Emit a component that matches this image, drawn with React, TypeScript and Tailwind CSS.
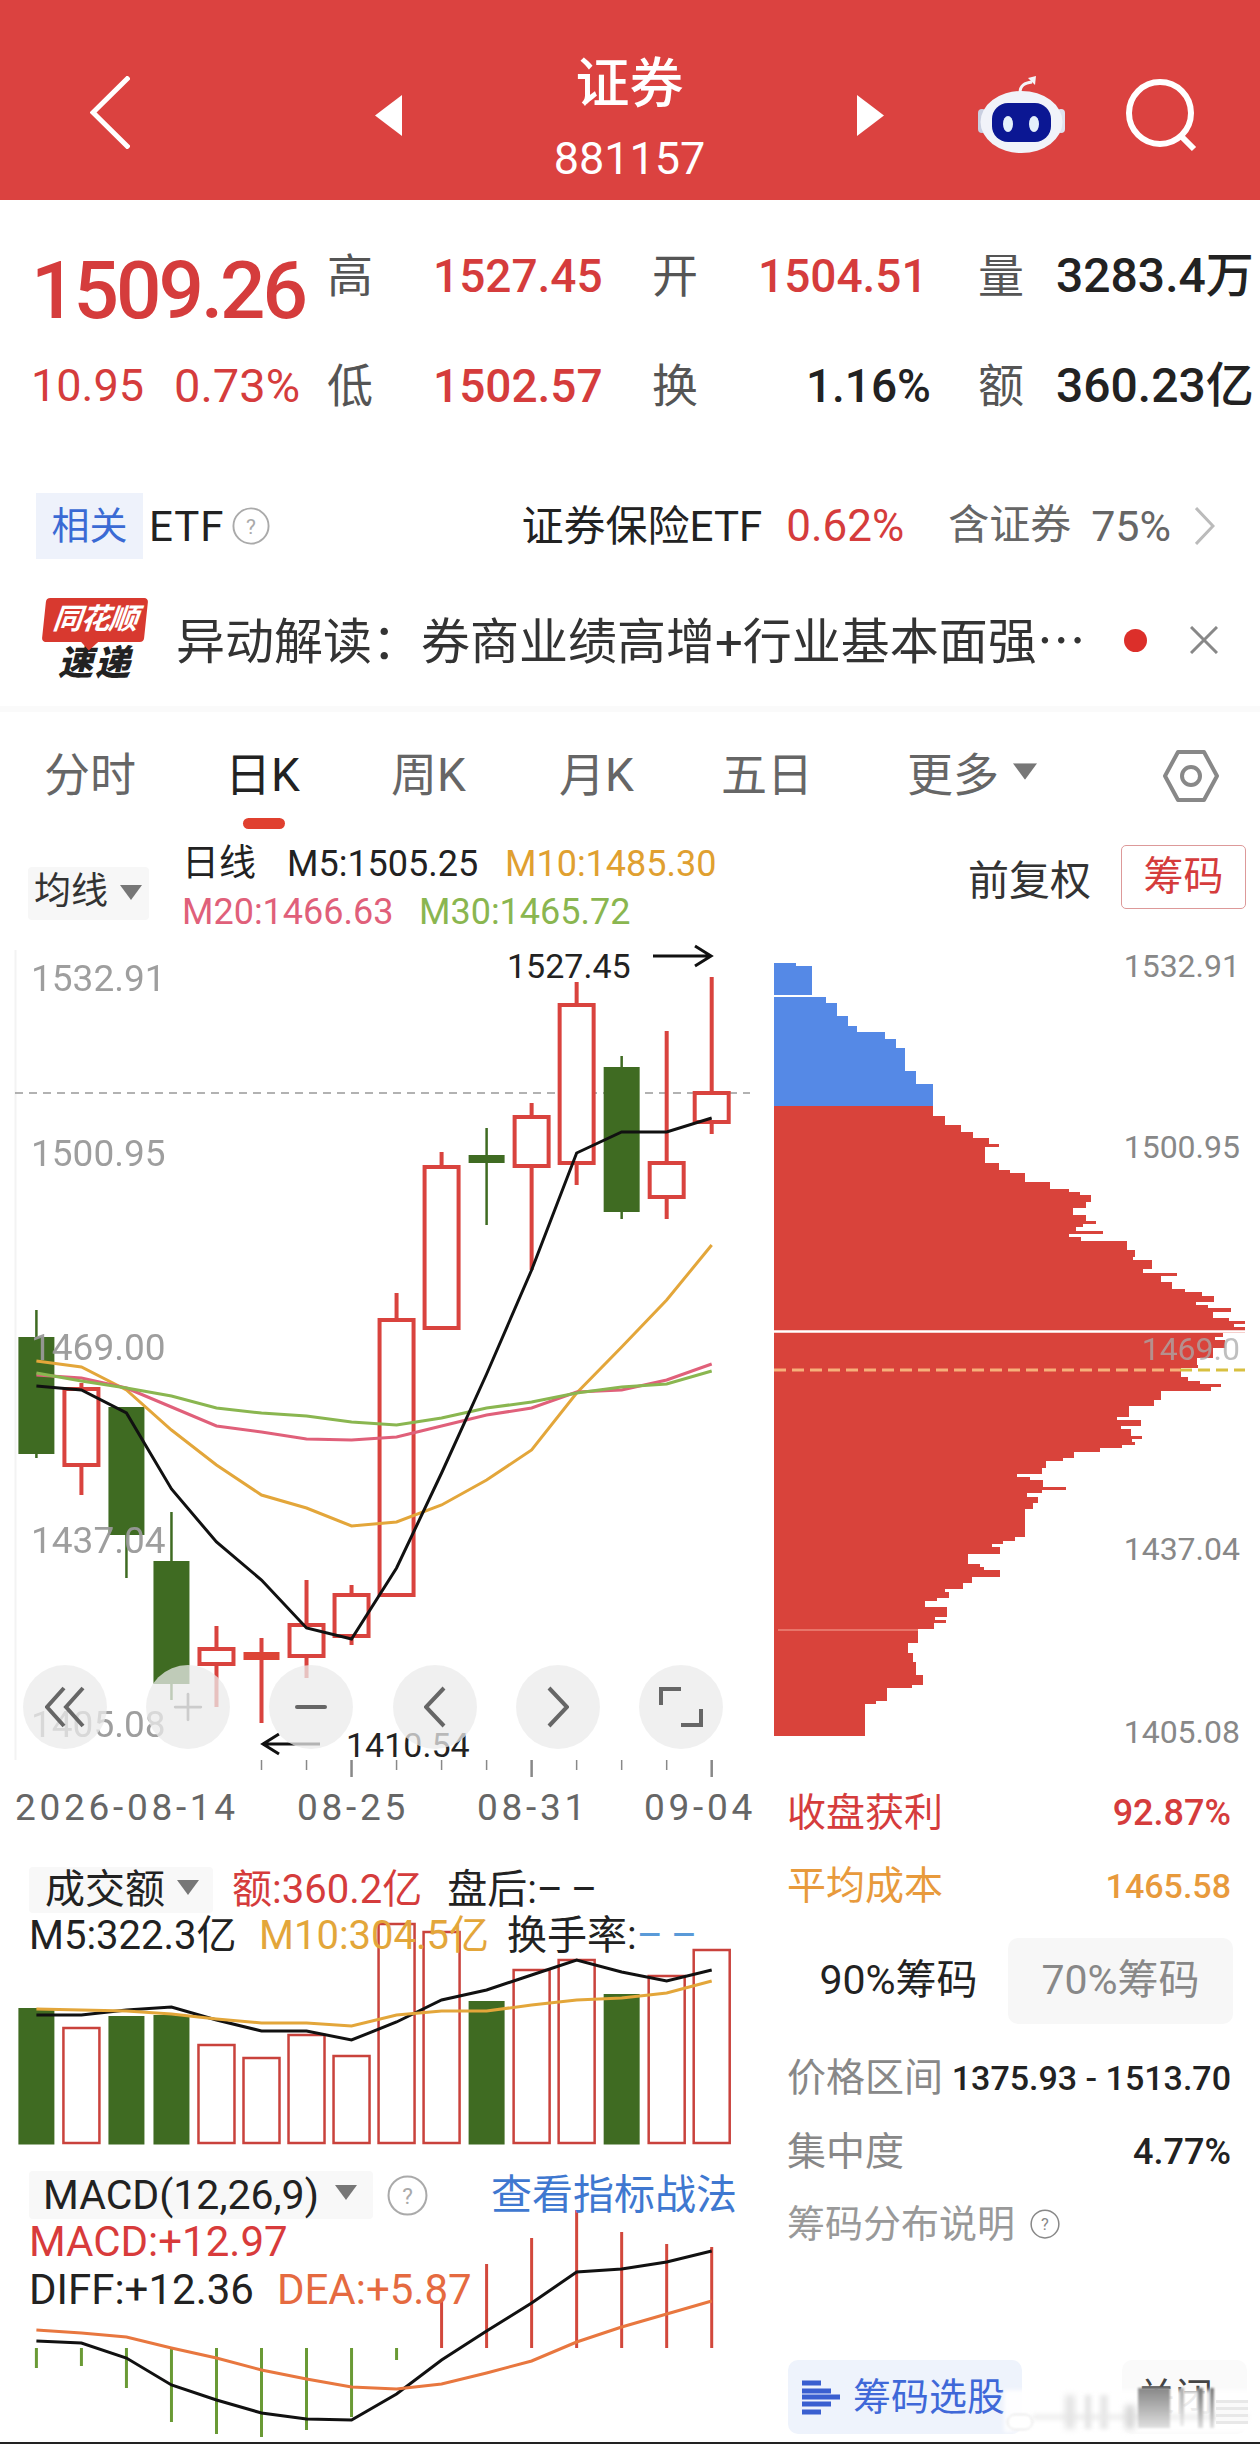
import { Minus, Plus } from "lucide-react";

const cx = (i: number) => 36.4 + 45.02 * i;

// x index order, [wick top, body top, body bottom, wick bottom, kind]
type Candle = [number, number, number, number, "up" | "down" | "solid"];
const candles: Candle[] = [
  [1310, 1337, 1454, 1458, "down"],
  [1383, 1387, 1465, 1495, "up"],
  [1407, 1407, 1535, 1578, "down"],
  [1512, 1561, 1684, 1700, "down"],
  [1626, 1647, 1664, 1707, "up"],
  [1638, 1652, 1660, 1723, "solid"],
  [1580, 1623, 1656, 1678, "up"],
  [1585, 1593, 1636, 1645, "up"],
  [1293, 1318, 1595, 1595, "up"],
  [1152, 1165, 1328, 1328, "up"],
  [1128, 1155, 1163, 1225, "down"],
  [1103, 1115, 1166, 1270, "up"],
  [982, 1003, 1163, 1185, "up"],
  [1056, 1067, 1212, 1219, "down"],
  [1031, 1161, 1197, 1219, "up"],
  [977, 1091, 1122, 1134, "up"],
];

const volumes: [number, boolean][] = [
  [2008, false], [2028, true], [2016, false], [2015, false], [2045, true], [2058, true], [2035, true], [2056, true],
  [1924, true], [1932, true], [2001, false], [1970, true], [1960, true], [1994, false], [1976, true], [1950, true],
];

const macdBars = [2368, 2366, 2388, 2422, 2434, 2437, 2430, 2417, 2360, 2300, 2264, 2238, 2210, 2232, 2244, 2247];

const pts = (ys: number[]) => ys.map((y, i) => `${cx(i)},${y}`).join(" ");

const ma5 = [1386, 1390, 1413, 1489, 1542, 1580, 1628, 1639, 1568, 1473, 1374, 1270, 1153, 1132, 1132, 1118];
const ma10 = [1361, 1367, 1390, 1430, 1465, 1495, 1508, 1526, 1522, 1505, 1480, 1450, 1393, 1347, 1300, 1245];
const ma20 = [1375, 1378, 1388, 1407, 1426, 1432, 1439, 1440, 1437, 1426, 1415, 1408, 1392, 1390, 1380, 1364];
const ma30 = [1373, 1381, 1388, 1396, 1408, 1413, 1416, 1422, 1425, 1418, 1408, 1402, 1393, 1387, 1384, 1371];

const volBlack = [2015, 2015, 2010, 2007, 2020, 2031, 2031, 2040, 2022, 2000, 1990, 1975, 1960, 1972, 1981, 1970];
const volYellow = [2009, 2010, 2011, 2014, 2019, 2023, 2023, 2026, 2015, 2011, 2011, 2005, 2000, 1998, 1993, 1981];

const diff = [2341, 2343, 2358, 2385, 2400, 2413, 2419, 2420, 2394, 2360, 2331, 2303, 2272, 2269, 2262, 2251];
const dea = [2330, 2333, 2337, 2348, 2358, 2370, 2379, 2387, 2389, 2384, 2373, 2361, 2342, 2327, 2314, 2301];

// chip profile steps, read as [y, right edge]
const blueTop: number[][] = [[963, 796], [966, 812]];
const blueSteps: number[][] = [
  [997, 826], [1003, 837], [1016, 848], [1026, 857], [1032, 885], [1039, 896], [1048, 905], [1071, 916], [1084, 933],
];
const redSteps: number[][] = [
  [1106, 933], [1116, 945], [1125, 961], [1132, 973], [1138, 989], [1144, 999], [1147, 985], [1163, 999], [1170, 1010],
  [1173, 1025], [1182, 1050], [1189, 1069], [1192, 1080], [1195, 1091], [1202, 1086], [1208, 1073], [1215, 1086], [1221, 1096],
  [1224, 1083], [1227, 1076], [1231, 1103], [1234, 1069], [1237, 1081], [1241, 1127], [1250, 1135], [1257, 1133], [1260, 1152],
  [1269, 1143], [1273, 1177], [1276, 1161], [1282, 1172], [1289, 1185], [1292, 1202], [1296, 1214], [1302, 1196], [1305, 1208],
  [1308, 1231], [1312, 1213], [1318, 1229], [1321, 1245], [1324, 1234], [1327, 1245], [1333, 1223], [1337, 1215], [1340, 1225],
  [1348, 1213], [1358, 1197], [1365, 1198], [1368, 1181], [1377, 1188], [1381, 1200], [1384, 1221], [1387, 1211], [1391, 1161],
  [1400, 1154], [1406, 1129], [1417, 1117], [1420, 1141], [1426, 1121], [1429, 1131], [1436, 1142], [1439, 1132], [1442, 1135],
  [1445, 1122], [1448, 1100], [1452, 1074], [1458, 1063], [1461, 1046], [1468, 1042], [1474, 1017], [1477, 1030], [1480, 1043],
  [1487, 1066], [1490, 1042], [1493, 1027], [1497, 1038], [1503, 1033], [1509, 1025], [1537, 1015], [1541, 1003], [1544, 992],
  [1547, 1000], [1554, 968], [1564, 980], [1567, 984], [1570, 1000], [1577, 972], [1583, 963], [1589, 945], [1592, 949],
  [1598, 937], [1601, 925], [1607, 947], [1617, 935], [1620, 946], [1623, 934], [1629, 918], [1643, 908], [1653, 913],
  [1662, 916], [1675, 923], [1685, 912], [1688, 887], [1701, 876], [1704, 865],
];

const chipPath = (steps: number[][], end: number) => {
  let d = `M774 ${steps[0][0]}`;
  steps.forEach(([y, x], i) => {
    const next = i + 1 < steps.length ? steps[i + 1][0] : end;
    d += ` L${x} ${y} L${x} ${next}`;
  });
  return d + ` L774 ${end} Z`;
};

function RoundBtn({ children }: { children: React.ReactNode }) {
  return (
    <div className="flex h-[84px] w-[84px] items-center justify-center rounded-full bg-[#ebebeb]/75 text-[#666]">
      {children}
    </div>
  );
}

function Caret({ className = "" }: { className?: string }) {
  return (
    <svg viewBox="0 0 22 15" className={`h-[15px] w-[22px] shrink-0 ${className}`}>
      <path d="M0 0H22L11 15Z" fill="#777" />
    </svg>
  );
}

function Help({ size, color = "#aaa" }: { size: number; color?: string }) {
  return (
    <svg viewBox="0 0 40 40" width={size} height={size} className="shrink-0">
      <circle cx="20" cy="20" r="18.5" fill="none" stroke={color} strokeWidth="2" />
      <text x="20" y="28" textAnchor="middle" fontSize="22" fill={color}>?</text>
    </svg>
  );
}

function Robot() {
  return (
    <svg viewBox="0 0 87 78" className="h-[78px] w-[87px] shrink-0">
      <path d="M42 18C42 10 47 8 54 7" fill="none" stroke="#f4f4f8" strokeWidth="3" />
      <path d="M50 3L58 1L57 10Z" fill="#f4f4f8" />
      <rect x="0" y="34" width="8" height="24" rx="4" fill="#c9cfe0" />
      <rect x="79" y="34" width="8" height="24" rx="4" fill="#dfe2ee" />
      <ellipse cx="43.500" cy="47" rx="41" ry="31" fill="#f1f3f9" />
      <rect x="14" y="28" width="59" height="39" rx="16" fill="#0b1793" />
      <ellipse cx="30" cy="49" rx="5" ry="8" fill="#e4f1fb" />
      <ellipse cx="56" cy="49" rx="5" ry="8" fill="#e4f1fb" />
    </svg>
  );
}

export default function App() {
  return (
    <div className="relative flex h-[2444px] w-[1260px] flex-col overflow-hidden bg-white text-[#222] [font-family:Roboto,'Noto_Sans_CJK_SC',sans-serif]">
      {/* title bar */}
      <header className="flex h-[200px] shrink-0 items-start bg-[#db4240] pl-[90px] text-white">
        <svg viewBox="0 0 40 73" className="mt-[76px] h-[73px] w-[40px] shrink-0">
          <path d="M39 1L3 36.500L39 72" fill="none" stroke="white" strokeWidth="5" />
        </svg>
        <svg viewBox="0 0 27 41" className="ml-[245px] mt-[95px] h-[41px] w-[27px] shrink-0">
          <path d="M27 0V41L0 20.500Z" fill="white" />
        </svg>
        <div className="mt-[55px] flex w-[455px] shrink-0 flex-col items-center">
          <div className="text-[54px] font-medium leading-[60px]">证券</div>
          <div className="mt-[19px] text-[45px] leading-[50px]">881157</div>
        </div>
        <svg viewBox="0 0 27 41" className="mt-[95px] h-[41px] w-[27px] shrink-0">
          <path d="M0 0V41L27 20.500Z" fill="white" />
        </svg>
        <div className="ml-[94px] mt-[75px]">
          <Robot />
        </div>
        <svg viewBox="0 0 72 76" className="ml-[60px] mt-[78px] h-[76px] w-[72px] shrink-0">
          <circle cx="35" cy="35" r="31" fill="none" stroke="white" strokeWidth="6" />
          <path d="M57 59L69 71" stroke="white" strokeWidth="6" />
        </svg>
      </header>

      {/* quote */}
      <section className="h-[280px] shrink-0 pl-[31px] pt-[21px]">
        <div className="grid grid-cols-[296px_106px_219px_106px_220px_78px_1fr] grid-rows-[110px_110px] items-start text-[46px] leading-[110px]">
          <div className="text-[80px] font-medium leading-[140px] tracking-[-3px] text-[#d53c3c]">1509.26</div>
          <div className="text-[#555]">高</div>
          <div className="font-medium text-[#d53c3c]">1527.45</div>
          <div className="text-[#555]">开</div>
          <div className="font-medium text-[#d53c3c]">1504.51</div>
          <div className="text-[#555]">量</div>
          <div className="whitespace-nowrap text-[48px] font-medium">3283.4万</div>

          <div className="flex gap-[30px] text-[#d53c3c]">
            <span className="text-[45px]">10.95</span>
            <span className="text-[47px]">0.73%</span>
          </div>
          <div className="text-[#555]">低</div>
          <div className="font-medium text-[#d53c3c]">1502.57</div>
          <div className="text-[#555]">换</div>
          <div className="pr-[47px] text-right font-medium">1.16%</div>
          <div className="text-[#555]">额</div>
          <div className="whitespace-nowrap text-[48px] font-medium">360.23亿</div>
        </div>
      </section>

      {/* related etf */}
      <section className="flex h-[90px] shrink-0 items-center pl-[36px] pr-[45px] pt-[2px]">
        <div className="flex h-[66px] w-[107px] items-center justify-center bg-[#eef2fb] text-[38px] text-[#3a6ad4]">相关</div>
        <div className="ml-[6px] text-[42px] tracking-[1px]">ETF</div>
        <div className="ml-[7px]">
          <Help size={38} />
        </div>
        <div className="ml-auto whitespace-nowrap text-[42px]">证券保险ETF</div>
        <div className="ml-[24px] text-[44px] text-[#d53c3c]">0.62%</div>
        <div className="ml-[44px] whitespace-nowrap text-[41px] text-[#666]">含证券</div>
        <div className="ml-[20px] text-[43px] text-[#666]">75%</div>
        <svg viewBox="0 0 20 38" className="ml-[24px] h-[38px] w-[20px] shrink-0">
          <path d="M1 1L18 19L1 37" fill="none" stroke="#bbb" strokeWidth="3" />
        </svg>
      </section>

      {/* news */}
      <section className="flex h-[136px] shrink-0 items-center pl-[44px] pt-[4px]">
        <div className="flex w-[102px] shrink-0 flex-col items-center">
          <div className="relative flex h-[44px] w-[102px] -skew-x-6 items-center justify-center rounded-[4px] bg-[#d8392f] text-[29px] font-bold italic tracking-[-1px] text-white">
            同花顺
            <div className="absolute -bottom-[6px] left-[42px] h-[12px] w-[12px] rotate-45 bg-[#d8392f]"></div>
          </div>
          <div className="mt-[4px] text-[35px] font-black italic leading-[36px] tracking-[2px] text-[#222]">速递</div>
        </div>
        <div className="ml-[30px] whitespace-nowrap text-[49px] leading-[60px] text-[#333]">
          异动解读：券商业绩高增+行业基本面强<span className="[font-family:'Noto_Sans_CJK_SC',sans-serif]">…</span>
        </div>
        <div className="ml-[38px] h-[23px] w-[23px] shrink-0 rounded-full bg-[#dc2f2a]"></div>
        <svg viewBox="0 0 28 28" className="ml-[43px] h-[28px] w-[28px] shrink-0">
          <path d="M1 1L27 27M27 1L1 27" stroke="#888" strokeWidth="3" />
        </svg>
      </section>
      <div className="h-[6px] shrink-0 bg-[#fafafa]"></div>

      {/* period tabs */}
      <nav className="flex h-[128px] shrink-0 items-start pl-[44px] pt-[38px] text-[46px] leading-[50px] text-[#666]">
        <div className="w-[181px]">分时</div>
        <div className="relative w-[166px] text-[#222]">
          日K
          <div className="absolute left-[18px] top-[68px] h-[11px] w-[42px] rounded-full bg-[#e0402f]"></div>
        </div>
        <div className="w-[168px]">周K</div>
        <div className="w-[162px]">月K</div>
        <div className="w-[186px]">五日</div>
        <div className="flex w-[256px] items-center">
          更多
          <Caret className="ml-[15px] -mt-[8px] scale-110" />
        </div>
        <svg viewBox="0 0 56 52" className="h-[52px] w-[56px] shrink-0">
          <path d="M15 2H41L54 26L41 50H15L2 26Z" fill="none" stroke="#888" strokeWidth="4" strokeLinejoin="round" />
          <circle cx="28" cy="26" r="9" fill="none" stroke="#888" strokeWidth="4" />
        </svg>
      </nav>

      {/* indicator legend */}
      <section className="flex h-[90px] shrink-0 items-start text-[36px]">
        <div className="ml-[28px] mt-[27px] flex h-[53px] w-[121px] items-center gap-[12px] rounded-[4px] bg-[#f7f7f7] pb-[3px] pl-[6px] text-[37px] text-[#333]">
          均线
          <Caret />
        </div>
        <div className="ml-[33px] flex flex-col leading-[48px]">
          <div className="flex whitespace-nowrap">
            <span className="w-[105px] text-[37px]">日线</span>
            <span className="w-[218px]">M5:1505.25</span>
            <span className="text-[#e0a030]">M10:1485.30</span>
          </div>
          <div className="flex whitespace-nowrap">
            <span className="w-[237px] text-[#e0607a]">M20:1466.63</span>
            <span className="text-[#8ab650]">M30:1465.72</span>
          </div>
        </div>
        <div className="ml-auto mt-[21px] text-[41px] leading-[40px] text-[#333]">前复权</div>
        <div className="ml-[30px] mr-[14px] mt-[5px] flex h-[64px] w-[125px] items-center justify-center rounded-[5px] border border-[#d99] text-[40px] text-[#d53c3c]">
          筹码
        </div>
      </section>

      <main className="flex flex-1">
        {/* left column: candles, amount, macd */}
        <div className="flex w-[760px] shrink-0 flex-col">
          <div className="relative h-[910px]">
            <svg viewBox="0 930 760 910" className="h-[910px] w-[760px]">
              <path d="M15.500 950V1760" stroke="#f3f3f3" strokeWidth="2" />
              <path d="M15 1093H750" stroke="#999" strokeWidth="1.500" strokeDasharray="8 6" />
              {candles.map(([wt, bt, bb, wb, kind], i) => {
                const x = cx(i);
                const color = kind === "down" ? "#3f6b22" : "#d9433e";
                const w = kind === "down" ? 2.500 : 4;
                return (
                  <g key={i}>
                    <path d={`M${x} ${wt}V${bt}M${x} ${bb}V${wb}`} stroke={color} strokeWidth={w} />
                    {kind === "up" ? (
                      <rect x={x - 17} y={bt + 2} width={34} height={bb - bt - 2} fill="white" stroke={color} strokeWidth="4" />
                    ) : (
                      <rect x={x - 18} y={bt} width={36} height={bb - bt} fill={kind === "down" ? color : "#dd4436"} />
                    )}
                  </g>
                );
              })}
              <g className="text-[37px]" fill="#999" opacity="0.95">
                <text x="31" y="991">1532.91</text>
                <text x="31" y="1166">1500.95</text>
                <text x="31" y="1360">1469.00</text>
                <text x="31" y="1553">1437.04</text>
                <text x="31" y="1737">1405.08</text>
              </g>
              <polyline points={pts(ma10)} fill="none" stroke="#e3a63a" strokeWidth="3" />
              <polyline points={pts(ma20)} fill="none" stroke="#e0607a" strokeWidth="3" />
              <polyline points={pts(ma30)} fill="none" stroke="#8ab650" strokeWidth="3" />
              <polyline points={pts(ma5)} fill="none" stroke="#111" strokeWidth="3" />

              <text x="507" y="978" className="text-[34px]" fill="#222">1527.45</text>
              <path d="M653 956H710M695 946L711 956L695 966" fill="none" stroke="#111" strokeWidth="3" />
              <text x="346" y="1757" className="text-[34px]" fill="#222">1410.54</text>
              <path d="M320 1744H263M279 1734L263 1744L279 1754" fill="none" stroke="#111" strokeWidth="3" />

              {candles.map((_, i) =>
                i >= 5 ? (
                  <path
                    key={i}
                    d={`M${cx(i)} 1760V${i === 7 || i === 11 || i === 15 ? 1777 : 1770}`}
                    stroke="#888"
                    strokeWidth={i === 7 || i === 11 || i === 15 ? 2.500 : 1.500}
                  />
                ) : null,
              )}
              <g className="text-[37px]" fill="#666" letterSpacing="3.700">
                <text x="15" y="1820">2026-08-14</text>
                <text x="297" y="1820">08-25</text>
                <text x="477" y="1820">08-31</text>
                <text x="644" y="1820">09-04</text>
              </g>
            </svg>
            {/* zoom buttons sit over the candles */}
            <div className="absolute left-[23px] top-[735px] flex w-[700px] justify-between">
              <RoundBtn>
                <svg viewBox="0 0 40 42" className="h-[42px] w-[40px]">
                  <path d="M19 2L2 21L19 40M38 2L21 21L38 40" fill="none" stroke="#666" strokeWidth="4" />
                </svg>
              </RoundBtn>
              <RoundBtn>
                <Plus size={44} strokeWidth={1.500} className="text-[#ccc]" />
              </RoundBtn>
              <RoundBtn>
                <Minus size={48} strokeWidth={2} />
              </RoundBtn>
              <RoundBtn>
                <svg viewBox="0 0 22 42" className="h-[42px] w-[22px]">
                  <path d="M20 2L2 21L20 40" fill="none" stroke="#666" strokeWidth="4" />
                </svg>
              </RoundBtn>
              <RoundBtn>
                <svg viewBox="0 0 22 42" className="h-[42px] w-[22px]">
                  <path d="M2 2L20 21L2 40" fill="none" stroke="#666" strokeWidth="4" />
                </svg>
              </RoundBtn>
              <RoundBtn>
                <svg viewBox="0 0 44 42" className="h-[42px] w-[44px]">
                  <path d="M2 19V3H22M22 39H42V23" fill="none" stroke="#666" strokeWidth="4" />
                </svg>
              </RoundBtn>
            </div>
          </div>

          {/* amount */}
          <div className="relative h-[310px] text-[40px]">
            <svg viewBox="0 1840 760 310" className="absolute inset-0 h-[310px] w-[760px]">
              {volumes.map(([top, up], i) =>
                up ? (
                  <rect key={i} x={cx(i) - 18} y={top} width={36} height={2143 - top} fill="none" stroke="#c9423c" strokeWidth="2.500" />
                ) : (
                  <rect key={i} x={cx(i) - 18} y={top} width={36} height={2144.500 - top} fill="#3f6b22" />
                ),
              )}
              <polyline points={pts(volBlack)} fill="none" stroke="#111" strokeWidth="3" />
              <polyline points={pts(volYellow)} fill="none" stroke="#e3a63a" strokeWidth="3" />
            </svg>
            <div className="relative flex items-center pt-[27px] leading-[46px]">
              <div className="ml-[29px] flex h-[46px] w-[184px] items-center rounded-[4px] bg-[#f8f8f8] pl-[16px]">
                成交额
                <Caret className="ml-[12px] -mt-[6px]" />
              </div>
              <div className="ml-[19px] whitespace-nowrap text-[#d53c3c]">额:360.2亿</div>
              <div className="ml-[25px] whitespace-nowrap">
                盘后:<span className="tracking-[8px]">––</span>
              </div>
            </div>
            <div className="relative flex items-center whitespace-nowrap leading-[46px]">
              <div className="ml-[29px] w-[230px]">M5:322.3亿</div>
              <div className="w-[248px] text-[#e3a63a]">M10:304.5亿</div>
              <div>换手率:</div>
              <div className="tracking-[8px] text-[#5a9ad8]">––</div>
            </div>
          </div>

          {/* macd */}
          <div className="relative h-[294px] text-[42px]">
            <svg viewBox="0 2150 760 294" className="absolute inset-0 h-[294px] w-[760px]">
              {macdBars.map((end, i) => (
                <path
                  key={i}
                  d={`M${cx(i)} 2348V${end}`}
                  stroke={i < 9 ? "#6a9a35" : "#d2483c"}
                  strokeWidth="3"
                />
              ))}
              <polyline points={pts(diff)} fill="none" stroke="#111" strokeWidth="3" />
              <polyline points={pts(dea)} fill="none" stroke="#e8773f" strokeWidth="3" />
            </svg>
            <div className="relative flex items-center pt-[21px]">
              <div className="ml-[29px] flex h-[48px] w-[344px] items-center rounded-[4px] bg-[#f8f8f8] pl-[14px] text-[41px] leading-[48px]">
                MACD(12,26,9)
                <Caret className="ml-[16px] -mt-[6px]" />
              </div>
              <div className="ml-[14px]">
                <Help size={41} />
              </div>
              <div className="ml-[63px] whitespace-nowrap text-[41px] leading-[48px] text-[#3f78d0]">查看指标战法</div>
            </div>
            <div className="relative ml-[29px] leading-[46px] text-[#d83b3b]">MACD:+12.97</div>
            <div className="relative ml-[29px] mt-[2px] flex gap-[23px] whitespace-nowrap leading-[46px]">
              <span>DIFF:+12.36</span>
              <span className="text-[#e56a40]">DEA:+5.87</span>
            </div>
          </div>
        </div>

        {/* right column: chip distribution */}
        <div className="flex w-[500px] shrink-0 flex-col">
          <svg viewBox="760 930 500 840" className="h-[840px] w-[500px] shrink-0">
            <path d={chipPath(blueTop, 995)} fill="#5589e6" />
            <path d={chipPath(blueSteps, 1106)} fill="#5589e6" />
            <path d={chipPath(redSteps, 1736)} fill="#d9433b" />
            <path d="M774 1331.500H1245" stroke="white" strokeWidth="2.500" />
            <path d="M778 1630H918" stroke="#f6a89a" strokeWidth="1" />
            <path d="M774 1370H1180" stroke="#f6b07a" strokeWidth="3" strokeDasharray="12 6" />
            <path d="M1180 1370H1245" stroke="#d8c040" strokeWidth="3" strokeDasharray="12 6" />
            <g textAnchor="end" className="text-[32px]" fill="#888">
              <text x="1240" y="977">1532.91</text>
              <text x="1240" y="1158">1500.95</text>
              <text x="1240" y="1360" opacity="0.75" fill="#aaa">1469.0</text>
              <text x="1240" y="1560">1437.04</text>
              <text x="1240" y="1743">1405.08</text>
            </g>
          </svg>

          <div className="mt-[20px] flex items-center justify-between pl-[27px] pr-[29px] text-[39px] leading-[46px] text-[#d53c3c]">
            <span>收盘获利</span>
            <span className="text-[36px] font-medium">92.87%</span>
          </div>
          <div className="mt-[27px] flex items-center justify-between pl-[27px] pr-[29px] text-[39px] leading-[46px] text-[#e89a3c]">
            <span>平均成本</span>
            <span className="text-[34px] font-medium">1465.58</span>
          </div>

          <div className="ml-[29px] mt-[29px] flex h-[86px] w-[444px] text-[41px]">
            <div className="flex w-[219px] items-center justify-center">90%筹码</div>
            <div className="flex w-[225px] items-center justify-center rounded-[10px] bg-[#f7f7f7] text-[#888]">70%筹码</div>
          </div>

          <div className="mt-[31px] flex items-center justify-between pl-[27px] pr-[29px] text-[39px] leading-[46px] text-[#888]">
            <span>价格区间</span>
            <span className="text-[34px] font-medium text-[#222]">1375.93 - 1513.70</span>
          </div>
          <div className="mt-[28px] flex items-center justify-between pl-[27px] pr-[29px] text-[39px] leading-[46px] text-[#888]">
            <span>集中度</span>
            <span className="text-[36px] font-medium text-[#222]">4.77%</span>
          </div>
          <div className="mt-[26px] flex items-center gap-[15px] pl-[27px] text-[38px] leading-[46px] text-[#999]">
            <span>筹码分布说明</span>
            <Help size={30} color="#888" />
          </div>

          <div className="mt-[113px] flex h-[74px] items-stretch pl-[28px]">
            <div className="flex w-[234px] items-center rounded-[10px] bg-[#eef3fc] pl-[14px] text-[38px] text-[#3f68d8]">
              <svg viewBox="0 0 38 36" className="h-[36px] w-[38px] shrink-0">
                <path d="M0 4H19M0 12H29M0 18H38M0 25H29M0 33H19" stroke="#3a5fd0" strokeWidth="5" />
              </svg>
              <span className="ml-[13px] whitespace-nowrap">筹码选股</span>
            </div>
            <div className="ml-[100px] flex w-[125px] items-center rounded-[10px] bg-[#fafafa] pl-[15px] text-[38px] text-[#444]">关闭</div>
          </div>
        </div>
      </main>

      {/* blurred watermark lying over the bottom right corner */}
      <div className="absolute left-[1004px] top-[2390px] h-[42px] w-[250px] bg-white/90 blur-[2px]"></div>
      <div className="absolute left-[1007px] top-[2414px] h-[16px] w-[26px] rounded-full border border-[#ddd] bg-white blur-[1px]"></div>
      <div className="absolute left-[1033px] top-[2414px] h-[6px] w-[215px] bg-[#f0f0f0] blur-[2px]"></div>
      <div className="absolute left-[1065px] top-[2395px] h-[34px] w-[10px] bg-[#e4e4e4] blur-[3px]"></div>
      <div className="absolute left-[1085px] top-[2395px] h-[34px] w-[6px] bg-[#e4e4e4] blur-[2px]"></div>
      <div className="absolute left-[1100px] top-[2395px] h-[34px] w-[8px] bg-[#e8e8e8] blur-[2px]"></div>
      <div className="absolute left-[1125px] top-[2405px] h-[24px] w-[10px] bg-[#d8d8d8] blur-[3px]"></div>
      <div className="absolute left-[1138px] top-[2388px] h-[40px] w-[32px] bg-linear-to-b from-[#888] to-[#e0e0e0] blur-[1px]"></div>
      <div className="absolute left-[1180px] top-[2388px] h-[38px] w-[4px] bg-linear-to-b from-[#aaa] to-[#eee] blur-[1px]"></div>
      <div className="absolute left-[1198px] top-[2388px] h-[40px] w-[5px] bg-linear-to-b from-[#777] to-[#e0e0e0] blur-[1px]"></div>
      <div className="absolute left-[1210px] top-[2388px] h-[40px] w-[4px] bg-linear-to-b from-[#777] to-[#e0e0e0] blur-[1px]"></div>
      <div className="absolute left-[1216px] top-[2400px] h-[24px] w-[32px] bg-[repeating-linear-gradient(0deg,#e8e8e8_0px,#e8e8e8_3px,#fafafa_3px,#fafafa_7px)]"></div>

      <div className="absolute bottom-0 left-0 h-[2px] w-full bg-[#222]"></div>
    </div>
  );
}
